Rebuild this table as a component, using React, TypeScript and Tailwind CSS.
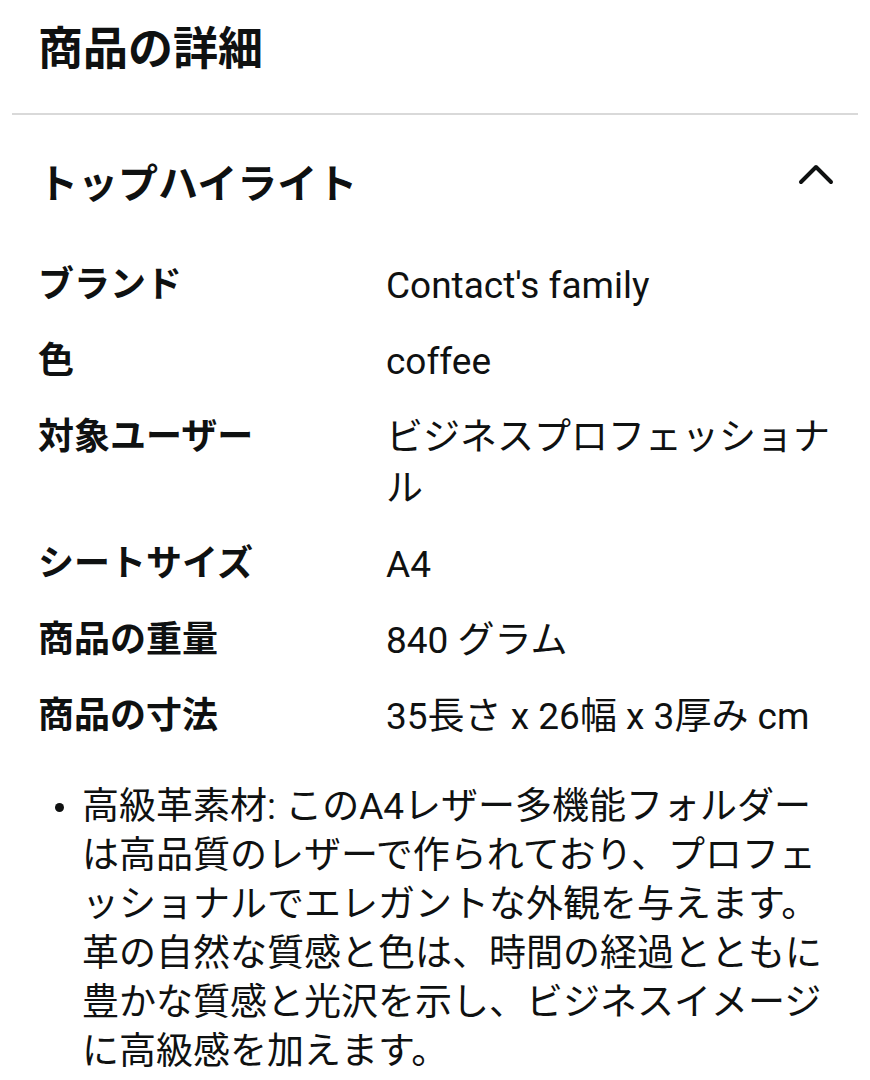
import React from "react";

const font = { fontFamily: "Roboto, 'Noto Sans CJK JP', 'Noto Sans', sans-serif" };

const rows: { label: string; value: string }[] = [
  { label: "ブランド", value: "Contact's family" },
  { label: "色", value: "coffee" },
  { label: "対象ユーザー", value: "ビジネスプロフェッショナル" },
  { label: "シートサイズ", value: "A4" },
  { label: "商品の重量", value: "840 グラム" },
  { label: "商品の寸法", value: "35長さ x 26幅 x 3厚み cm" },
];

function ChevronUp() {
  return (
    <svg width="36" height="24" viewBox="0 0 36 24" fill="none">
      <polyline
        points="3,20 18,5 33,20"
        stroke="#0f1111"
        strokeWidth="4"
        strokeLinecap="round"
        strokeLinejoin="round"
      />
    </svg>
  );
}

export default function App() {
  return (
    <div className="min-h-[1080px] w-[870px] bg-white text-[#0f1111]" style={font}>
      {/* Header */}
      <div className="px-[38px] pt-[21px] pb-[34px]">
        <h1 className="text-[45px] leading-[58px] font-bold">商品の詳細</h1>
      </div>

      <div className="mx-[12px] h-[2px] bg-[#d9d9d9]" />

      <div className="px-[38px]">
        {/* Section header */}
        <div className="flex items-start justify-between pt-[44px]">
          <h2 className="text-[40px] leading-[52px] font-bold">トップハイライト</h2>
          <div className="mt-[3px] mr-[-2px]">
            <ChevronUp />
          </div>
        </div>

        {/* Attributes table */}
        <div className="mt-[49px] flex flex-col gap-[25px]">
          {rows.map((row) => (
            <div key={row.label} className="flex">
              <div className="w-[348px] shrink-0 text-[36px] leading-[51px] font-bold">
                {row.label}
              </div>
              <div className="w-[446px] text-[37px] leading-[51px]">{row.value}</div>
            </div>
          ))}
        </div>

        {/* Bullet */}
        <div className="mt-[40px] flex">
          <div className="w-[44px] shrink-0 flex justify-center pt-[21px] pr-[2px]">
            <span className="block w-[9px] h-[9px] rounded-full bg-[#0f1111]" />
          </div>
          <p className="w-[752px] text-[37px] leading-[49px]">
            高級革素材: このA4レザー多機能フォルダーは高品質のレザーで作られており、プロフェッショナルでエレガントな外観を与えます。革の自然な質感と色は、時間の経過とともに豊かな質感と光沢を示し、ビジネスイメージに高級感を加えます。
          </p>
        </div>
      </div>
    </div>
  );
}
